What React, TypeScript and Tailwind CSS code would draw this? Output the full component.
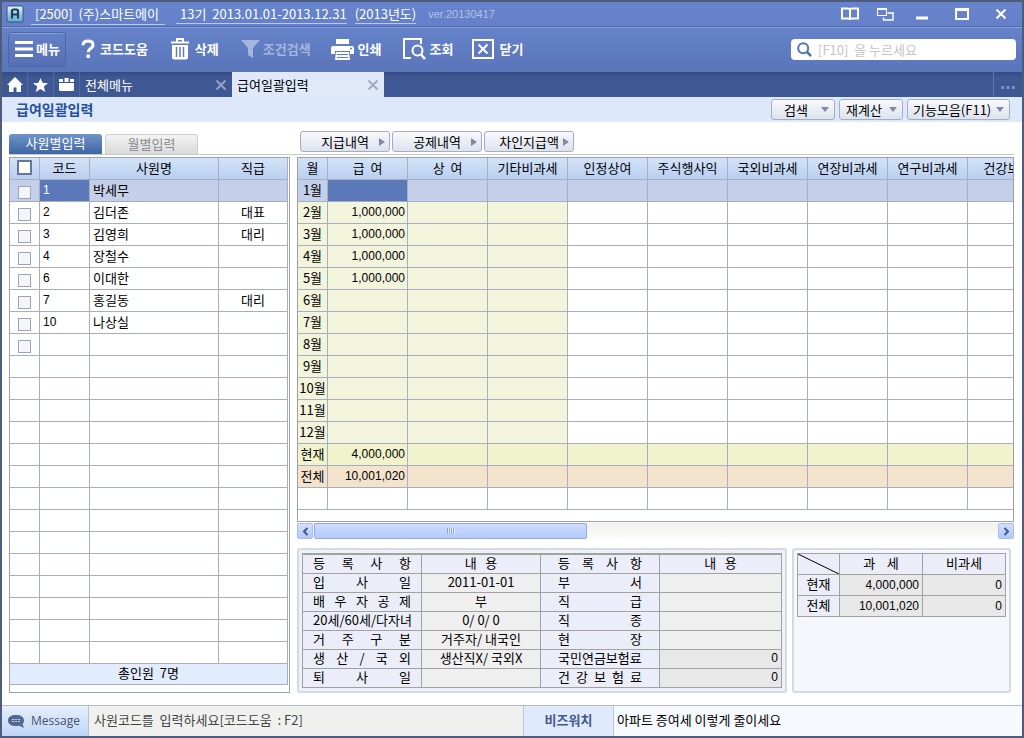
import React from "react";

type Employee = { code: string; name: string; rank: string };

const EMPLOYEES: Employee[] = [
  { code: "1", name: "박세무", rank: "" },
  { code: "2", name: "김더존", rank: "대표" },
  { code: "3", name: "김영희", rank: "대리" },
  { code: "4", name: "장철수", rank: "" },
  { code: "6", name: "이대한", rank: "" },
  { code: "7", name: "홍길동", rank: "대리" },
  { code: "10", name: "나상실", rank: "" },
];

const EMPLOYEE_ROWS = 22;

const PAY_COLUMNS = [
  "급 여",
  "상 여",
  "기타비과세",
  "인정상여",
  "주식행사익",
  "국외비과세",
  "연장비과세",
  "연구비과세",
  "건강보험",
];

type PayRow = { label: string; pay: string; kind: "selected" | "month" | "current" | "total" | "blank" };

const PAY_ROWS: PayRow[] = [
  { label: "1월", pay: "", kind: "selected" },
  ...["2월", "3월", "4월", "5월"].map((label): PayRow => ({ label, pay: "1,000,000", kind: "month" })),
  ...["6월", "7월", "8월", "9월", "10월", "11월", "12월"].map((label): PayRow => ({ label, pay: "", kind: "month" })),
  { label: "현재", pay: "4,000,000", kind: "current" },
  { label: "전체", pay: "10,001,020", kind: "total" },
  { label: "", pay: "", kind: "blank" },
];

const DETAILS = [
  ["입 사 일", "2011-01-01", "부 서", ""],
  ["배 우 자 공 제", "부", "직 급", ""],
  ["20세/60세/다자녀", "0/ 0/ 0", "직 종", ""],
  ["거 주 구 분", "거주자/ 내국인", "현 장", ""],
  ["생 산 / 국 외", "생산직X/ 국외X", "국민연금보험료", "0"],
  ["퇴 사 일", "", "건 강 보 험 료", "0"],
];

function payCellColor(kind: PayRow["kind"], column: number) {
  if (kind === "selected") return column === 0 ? "bg-[#5b78b8]" : "bg-[#c4cfe9]";
  if (kind === "current") return "bg-[#f1f3cc]";
  if (kind === "total") return "bg-[#f3e3cc]";
  if (kind === "month" && column < 3) return "bg-[#f3f4dc]";
  return "bg-white";
}

const CELL = "h-[22px] border-r border-b border-[#a9adc0] p-0 pb-0.5 leading-[18px] font-normal whitespace-nowrap";
const HEAD = "bg-linear-to-b from-[#d3e3f8] to-[#b9cff0]";

function Logo() {
  return (
    <svg width="18" height="18" viewBox="0 0 18 18" className="shrink-0" aria-hidden="true">
      <defs>
        <linearGradient id="logo" x1="0" y1="0" x2="0" y2="1">
          <stop offset="0" stopColor="#e4f6fa" />
          <stop offset="1" stopColor="#5aa9cf" />
        </linearGradient>
      </defs>
      <rect x="1" y="1" width="16" height="16" rx="1" fill="url(#logo)" stroke="#3c5080" />
      <path d="M6 13.500V6Q6 4.500 7.500 4.500h3Q12 4.500 12 6V13.500M6 9.500h6" fill="none" stroke="#1f3f5c" strokeWidth="2.200" />
    </svg>
  );
}

const HelpIcon = () => (
  <svg width="14" height="20" viewBox="0 0 14 20" aria-hidden="true">
    <path d="M2 6.200Q2 2 7 2t5 3.800q0 2.400-2.500 3.800Q7.200 11 7.200 13.300" fill="none" stroke="#fff" strokeWidth="3" />
    <rect x="5.500" y="15.500" width="3.400" height="3.500" fill="#fff" />
  </svg>
);

const TrashIcon = () => (
  <svg width="18" height="22" viewBox="0 0 18 22" aria-hidden="true">
    <path d="M6 3.500V1h6v2.500M0 4.500h18" fill="none" stroke="#fff" strokeWidth="2" />
    <path d="M1 7h16v12.500q0 2-2 2H3q-2 0-2-2z" fill="#fff" />
    <path d="M5.500 9v10M9 9v10M12.500 9v10" stroke="#5f7bc1" strokeWidth="1.500" />
  </svg>
);

const FunnelIcon = () => (
  <svg width="19" height="18" viewBox="0 0 19 18" aria-hidden="true">
    <path d="M0 0h19l-7 8v10l-5-3V8z" fill="#a5b6de" />
  </svg>
);

const PrinterIcon = () => (
  <svg width="23" height="23" viewBox="0 0 23 23" aria-hidden="true">
    <path d="M5 1h13v5H5z" fill="#fff" />
    <path d="M2 8h19q2 0 2 2v6h-4v-3H4v3H0v-6q0-2 2-2z" fill="#fff" />
    <path d="M5 14h13l1 8H4z" fill="#fff" />
    <path d="M6 16.500h11M6 19.500h11" stroke="#5f7bc1" />
    <circle cx="20" cy="10.500" r="1" fill="#5f7bc1" />
  </svg>
);

const LookupIcon = () => (
  <svg width="23" height="22" viewBox="0 0 23 22" aria-hidden="true">
    <path d="M8 20H1V1h17v5" fill="none" stroke="#fff" strokeWidth="2" />
    <circle cx="14.500" cy="12.500" r="5" fill="none" stroke="#fff" strokeWidth="2" />
    <path d="M18 16.500l4 4.500" stroke="#fff" strokeWidth="2.400" />
  </svg>
);

const CloseBoxIcon = () => (
  <svg width="22" height="20" viewBox="0 0 22 20" aria-hidden="true">
    <rect x="1" y="1" width="20" height="18" fill="none" stroke="#fff" strokeWidth="2" />
    <path d="M6.500 5.500l9 9M15.500 5.500l-9 9" stroke="#fff" strokeWidth="2" />
  </svg>
);

const CrossIcon = ({ className }: { className: string }) => (
  <svg width="10" height="10" viewBox="0 0 10 10" className={className} aria-hidden="true">
    <path d="M0.500 0.500l9 9M9.500 0.500l-9 9" fill="none" stroke="currentColor" strokeWidth="2" />
  </svg>
);

function TitleBar() {
  return (
    <header className="flex h-[25px] items-center justify-between border-b border-[#4f6bb0] bg-linear-to-b from-[#6684cd] to-[#6580c8] pr-4 pl-1 text-white">
      <div className="flex items-center">
        <Logo />
        <span className="ml-[7px] border-b border-[#b9c8ea] pr-1.5 pl-1 leading-5">[2500]&nbsp; (주)스마트에이</span>
        <span className="ml-[11px] border-b border-[#b9c8ea] pl-1 leading-[19px]">13기&nbsp; 2013.01.01-2013.12.31</span>
        <span className="ml-2 border-b border-[#b9c8ea] leading-[19px]">(2013년도)</span>
        <span className="ml-3 font-['Liberation_Sans',sans-serif] text-[11px] text-[#b3c2e8]">ver.20130417</span>
      </div>
      <div className="flex items-center">
        <button type="button" aria-label="도움말" className="mr-[18px]">
          <svg width="18" height="14" viewBox="0 0 18 14">
            <path d="M1 1.500h6q2 0 2 1.500 0-1.500 2-1.500h6v10h-6q-2 0-2 1.500 0-1.500-2-1.500H1zM9 3v10" fill="none" stroke="#fff" strokeWidth="2" />
          </svg>
        </button>
        <button type="button" aria-label="창 전환" className="mr-[22px]">
          <svg width="17" height="13" viewBox="0 0 17 13">
            <rect x="0.500" y="1" width="9" height="6.500" fill="none" stroke="#fff" />
            <path d="M0 1h10" stroke="#fff" strokeWidth="2" />
            <path d="M10.500 5h6M16 4v8.500M16.500 12H6.500V9.500" fill="none" stroke="#fff" strokeWidth="1.400" />
          </svg>
        </button>
        <button type="button" aria-label="최소화" className="mr-[27px]">
          <svg width="12" height="12" viewBox="0 0 12 12">
            <path d="M0 10h12" stroke="#fff" strokeWidth="3" />
          </svg>
        </button>
        <button type="button" aria-label="최대화" className="mr-[27px]">
          <svg width="14" height="12" viewBox="0 0 14 12">
            <path d="M1 1h12v10H1z" fill="none" stroke="#fff" strokeWidth="2" />
            <path d="M0 1.500h14" stroke="#fff" strokeWidth="3" />
          </svg>
        </button>
        <button type="button" aria-label="창 닫기">
          <CrossIcon className="text-white" />
        </button>
      </div>
    </header>
  );
}

function ToolButton({ icon, label, muted, className }: { icon: React.ReactNode; label: string; muted?: boolean; className: string }) {
  return (
    <button type="button" className={`flex items-center font-bold ${muted ? "text-[#a5b6de]" : "text-white"} ${className}`}>
      {icon}
      {label}
    </button>
  );
}

function Toolbar() {
  return (
    <div className="flex h-[45px] items-center justify-between border-t border-[#8aa2dc] bg-linear-to-b from-[#6682ca] to-[#5a75b8] pr-1.5 pb-0.5 pl-1.5">
      <div className="flex items-center">
        <button
          type="button"
          className="flex h-[35px] w-[58px] items-center gap-[3px] rounded border border-[#4a65a8] bg-linear-to-b from-[#6581c6] to-[#5570b2] pl-1.5 font-bold text-white shadow-[inset_0_1px_0_#86a0dc]"
        >
          <svg width="18" height="16" viewBox="0 0 18 16" className="shrink-0" aria-hidden="true">
            <path d="M0 1.500h18M0 8h18M0 14.500h18" stroke="#fff" strokeWidth="3" />
          </svg>
          메뉴
        </button>
        <ToolButton icon={<HelpIcon />} label="코드도움" className="ml-[15px] gap-[5px]" />
        <ToolButton icon={<TrashIcon />} label="삭제" className="ml-[23px] gap-1.5" />
        <ToolButton icon={<FunnelIcon />} label="조건검색" muted className="ml-[22px] gap-[3px]" />
        <ToolButton icon={<PrinterIcon />} label="인쇄" className="ml-5 gap-1" />
        <ToolButton icon={<LookupIcon />} label="조회" className="ml-[21px] gap-1" />
        <ToolButton icon={<CloseBoxIcon />} label="닫기" className="ml-[19px] gap-[5px]" />
      </div>
      <label className="flex h-[21px] w-[225px] items-center gap-1.5 rounded-[4px] bg-white pl-1.5">
        <svg width="15" height="15" viewBox="0 0 15 15" className="shrink-0" aria-hidden="true">
          <circle cx="6.200" cy="6.200" r="5" fill="none" stroke="#5573ae" strokeWidth="2" />
          <path d="M10 10l4 4" stroke="#5573ae" strokeWidth="2.500" />
        </svg>
        <input
          type="text"
          aria-label="검색어"
          placeholder="[F10]  을 누르세요"
          className="h-full min-w-0 flex-1 bg-transparent outline-none placeholder:text-[#c4c4c8]"
        />
      </label>
    </div>
  );
}

function TabBar() {
  const iconCell = "flex w-[26px] items-center justify-center border-r border-[#5069a3]";
  return (
    <nav className="flex h-[25px] bg-linear-to-b from-[#344b80] via-[#3f5893] via-20% to-[#3f5893] text-white">
      <button type="button" aria-label="홈" className={iconCell}>
        <svg width="16" height="15" viewBox="0 0 16 15">
          <path d="M8 0l8 8h-2v7H9.500v-4.500h-3V15H2V8H0z" fill="#fff" />
        </svg>
      </button>
      <button type="button" aria-label="즐겨찾기" className={iconCell}>
        <svg width="15" height="14" viewBox="0 0 15 14">
          <path d="M7.500 0l2.100 4.800 5.400.4-4.200 3.400L12.200 14 7.500 11 2.800 14l1.400-5.400L0 5.200l5.400-.4z" fill="#fff" />
        </svg>
      </button>
      <button type="button" aria-label="화면목록" className={iconCell}>
        <svg width="15" height="13" viewBox="0 0 15 13">
          <path d="M0 5h15v6.500q0 1.500-1.500 1.500h-12Q0 13 0 11.500zM0 1h4v3H0zM5.500 0h4v4h-4zM11 1h4v3h-4z" fill="#fff" />
        </svg>
      </button>
      <a href="#menu" className="flex w-[152px] items-center justify-between pr-1.5 pl-[5px]">
        전체메뉴
        <CrossIcon className="text-[#93a3c8]" />
      </a>
      <a href="#payroll" className="flex w-[152px] items-center justify-between bg-[#dfe9fa] pr-1.5 pl-[5px] text-black">
        급여일괄입력
        <CrossIcon className="text-[#a3abba]" />
      </a>
      <button type="button" aria-label="더보기" className="ml-auto w-[29px] border-l border-[#5f77ae] pt-1.5">
        <svg width="14" height="3" viewBox="0 0 14 3" className="mx-auto">
          <path d="M0 0h3v3H0zM5.500 0h3v3h-3zM11 0h3v3h-3z" fill="#7d90bf" />
        </svg>
      </button>
    </nav>
  );
}

const BUTTON = "flex h-[21px] items-center justify-between rounded-[3px] border border-[#a3adc6] bg-linear-to-b from-[#f8f9fc] to-[#dde2ec] whitespace-nowrap text-black";

function MenuButton({ label, className }: { label: string; className: string }) {
  return (
    <button type="button" className={`${BUTTON} ${className}`}>
      {label}
      <svg width="8" height="5" viewBox="0 0 8 5" className="shrink-0" aria-hidden="true">
        <path d="M0 0h8L4 5z" fill="#8289a3" />
      </svg>
    </button>
  );
}

function JumpButton({ label }: { label: string }) {
  return (
    <button type="button" className={`${BUTTON} w-[90px] pr-1`}>
      <span className="flex-1 text-right">{label}</span>
      <svg width="6" height="8" viewBox="0 0 6 8" className={label.length > 4 ? "ml-1" : "ml-2.5"} aria-hidden="true">
        <path d="M0 0l6 4-6 4z" fill="#8289a3" />
      </svg>
    </button>
  );
}

function EmployeeGrid() {
  const rows: (Employee | null)[] = Array.from({ length: EMPLOYEE_ROWS }, (_, i) => EMPLOYEES[i] ?? null);
  return (
    <section className="w-[281px] shrink-0 border border-[#9aa3bb] bg-white">
      <table className="w-[278px] table-fixed border-separate border-spacing-0">
        <colgroup>
          <col className="w-[30px]" />
          <col className="w-[50px]" />
          <col className="w-[129px]" />
          <col className="w-[69px]" />
        </colgroup>
        <thead>
          <tr>
            <th className={`${CELL} ${HEAD}`}>
              <input type="checkbox" aria-label="전체 선택" className="mx-auto block size-[15px] appearance-none border-2 border-[#64779f] bg-white" />
            </th>
            <th className={`${CELL} ${HEAD}`}>코드</th>
            <th className={`${CELL} ${HEAD}`}>사원명</th>
            <th className={`${CELL} ${HEAD}`}>직급</th>
          </tr>
        </thead>
        <tbody>
          {rows.map((row, i) => {
            const tone = i === 0 ? "bg-[#c4cfe9]" : "bg-white";
            return (
              <tr key={i}>
                <td className={`${CELL} ${tone} align-bottom`}>
                  {i <= EMPLOYEES.length && (
                    <input
                      type="checkbox"
                      aria-label={row ? `${row.name} 선택` : "새 사원 선택"}
                      className="mx-auto block size-[13px] appearance-none border border-[#9da3b8] bg-[#f4f5f8]"
                    />
                  )}
                </td>
                <td className={`${CELL} ${i === 0 ? "bg-[#5b78b8] text-white" : tone} pl-[3px] font-['Liberation_Sans',sans-serif] text-xs`}>
                  {row?.code}
                </td>
                <td className={`${CELL} ${tone} pl-[3px]`}>{row?.name}</td>
                <td className={`${CELL} ${tone} text-center`}>{row?.rank}</td>
              </tr>
            );
          })}
        </tbody>
        <tfoot>
          <tr>
            <td colSpan={4} className="h-[21px] border-r border-b border-[#a9adc0] bg-[#e1ecfc] p-0 pb-0.5 text-center leading-[18px]">
              총인원&nbsp; 7명
            </td>
          </tr>
        </tfoot>
      </table>
    </section>
  );
}

function PayGrid() {
  return (
    <div className="overflow-hidden border border-[#9aa0b0] bg-white pb-[11px]">
      <table className="w-[750px] table-fixed border-separate border-spacing-0">
        <colgroup>
          <col className="w-[30px]" />
          {PAY_COLUMNS.map((c) => (
            <col key={c} className="w-20" />
          ))}
        </colgroup>
        <thead>
          <tr>
            <th className={`${CELL} ${HEAD}`}>월</th>
            {PAY_COLUMNS.map((c) => (
              <th key={c} className={`${CELL} ${HEAD}`}>
                {c.replace(" ", "\u00a0\u00a0")}
              </th>
            ))}
          </tr>
        </thead>
        <tbody>
          {PAY_ROWS.map((row, r) => (
            <tr key={r}>
              <th className={`${CELL} ${row.kind === "selected" ? "bg-[#c4cfe9]" : payCellColor(row.kind, 1)}`}>{row.label}</th>
              {PAY_COLUMNS.map((c, i) => (
                <td
                  key={c}
                  className={`${CELL} ${payCellColor(row.kind, i)} pr-0.5 text-right font-['Liberation_Sans',sans-serif] text-xs`}
                >
                  {i === 0 ? row.pay : ""}
                </td>
              ))}
            </tr>
          ))}
        </tbody>
      </table>
    </div>
  );
}

function ScrollBar() {
  const arrow = "flex w-4 shrink-0 items-center justify-center rounded-[2px] border border-[#a9bdee] bg-linear-to-b from-[#d3defb] to-[#b4c8f8]";
  return (
    <div className="mt-px flex h-4 bg-linear-to-b from-[#f0f0ec] to-[#fdfdfb]">
      <button type="button" aria-label="왼쪽으로" className={arrow}>
        <svg width="7" height="9" viewBox="0 0 7 9">
          <path d="M5.500 1L2 4.500 5.500 8" fill="none" stroke="#405a94" strokeWidth="2" />
        </svg>
      </button>
      <div className="min-w-0 flex-1 px-px">
        <div className="flex h-4 w-2/5 items-center justify-center gap-px rounded-[2px] border border-[#8eabe6] bg-linear-to-b from-[#cddcff] to-[#b6c9fa]">
          {[0, 1, 2, 3].map((n) => (
            <span key={n} className="h-1.5 w-px bg-[#8aa5e6] shadow-[1px_0_0_#e6eeff]" />
          ))}
        </div>
      </div>
      <button type="button" aria-label="오른쪽으로" className={arrow}>
        <svg width="7" height="9" viewBox="0 0 7 9">
          <path d="M1.500 1L5 4.500 1.500 8" fill="none" stroke="#405a94" strokeWidth="2" />
        </svg>
      </button>
    </div>
  );
}

const PANEL = "rounded-[3px] border-2 border-[#d3dae6] p-[3px]";
const DETAIL = "h-[19px] border-r border-b border-[#a3a29e] p-0 pb-0.5 leading-4 font-normal whitespace-nowrap";

function DetailPanel() {
  return (
    <div className={`${PANEL} min-w-0 flex-1 bg-[#edf1f8]`}>
      <table className="w-full table-fixed border-separate border-spacing-0 border-t-2 border-l border-[#a3a29e]">
        <colgroup>
          <col className="w-[119px]" />
          <col className="w-[119px]" />
          <col className="w-[119px]" />
          <col />
        </colgroup>
        <thead>
          <tr>
            <th className={`${DETAIL} bg-[#ebeef8] px-2.5 [text-align-last:justify]`}>등 록 사 항</th>
            <th className={`${DETAIL} bg-[#ebeef8]`}>내&nbsp;&nbsp; 용</th>
            <th className={`${DETAIL} bg-[#ebeef8] px-[17px] [text-align-last:justify]`}>등 록 사 항</th>
            <th className={`${DETAIL} bg-[#ebeef8]`}>내&nbsp;&nbsp; 용</th>
          </tr>
        </thead>
        <tbody>
          {DETAILS.map(([a, av, b, bv]) => (
            <tr key={a}>
              <th className={`${DETAIL} bg-[#ebeef8] px-2.5 [text-align-last:justify]`}>{a}</th>
              <td className={`${DETAIL} bg-[#efefef] text-center`}>{av}</td>
              <th className={`${DETAIL} bg-[#ebeef8] px-[17px] [text-align-last:justify]`}>{b}</th>
              <td className={`${DETAIL} ${bv ? "bg-[#e8e8e8]" : "bg-[#efefef]"} pr-[3px] text-right font-['Liberation_Sans',sans-serif] text-xs`}>
                {bv}
              </td>
            </tr>
          ))}
        </tbody>
      </table>
    </div>
  );
}

function TaxPanel() {
  const rows = [
    ["현재", "4,000,000", "0"],
    ["전체", "10,001,020", "0"],
  ];
  const cell = "h-[21px] border-r border-b border-[#a3a29e] leading-[18px] font-normal whitespace-nowrap";
  return (
    <div className={`${PANEL} w-[219px] shrink-0 bg-[#f4f7fc]`}>
      <table className="w-full table-fixed border-separate border-spacing-0 border-t border-l border-[#a3a29e]">
        <colgroup>
          <col className="w-[42px]" />
          <col />
          <col />
        </colgroup>
        <thead>
          <tr>
            <th className={`${cell} bg-[#ebeef8] p-0`}>
              <svg width="41" height="20" viewBox="0 0 41 20" className="block" aria-hidden="true">
                <path d="M0 0l41 20" stroke="#000" />
              </svg>
            </th>
            <th className={`${cell} bg-[#ebeef8] p-0 pb-0.5`}>과&nbsp;&nbsp;&nbsp; 세</th>
            <th className={`${cell} bg-[#ebeef8] p-0 pb-0.5`}>비과세</th>
          </tr>
        </thead>
        <tbody>
          {rows.map(([label, taxed, free]) => (
            <tr key={label}>
              <th className={`${cell} bg-[#ebeef8] p-0 pb-0.5`}>{label}</th>
              <td className={`${cell} bg-[#e8e8e8] p-0 pr-[3px] text-right font-['Liberation_Sans',sans-serif] text-xs`}>{taxed}</td>
              <td className={`${cell} bg-[#e8e8e8] p-0 pr-[3px] text-right font-['Liberation_Sans',sans-serif] text-xs`}>{free}</td>
            </tr>
          ))}
        </tbody>
      </table>
    </div>
  );
}

function StatusBar() {
  return (
    <footer className="flex h-[31px] border-t border-[#b4bcc8] bg-[#f6f9fe]">
      <div className="flex w-[87px] shrink-0 items-center gap-1.5 border-r border-[#b4c2d8] bg-linear-to-b from-[#e6effc] to-[#bfd5f6] pl-1.5 font-['Open_Sans',sans-serif] text-xs text-[#46536f]">
        <svg width="17" height="13" viewBox="0 0 17 13" className="shrink-0" aria-hidden="true">
          <path d="M8 0c5 0 8 2 8 5.500 0 1.500-.5 2.500-1.500 3.500l1.500 4-4.500-2.300c-1 .3-2.200.4-3.500.4C3 11 0 9 0 5.500S3 0 8 0z" fill="#54678f" />
          <path d="M4 4.500h8M4 6.500h8" stroke="#c9d6ee" strokeDasharray="2 1" />
        </svg>
        Message
      </div>
      <div className="flex flex-1 items-center bg-[#f0f0ee] pb-0.5 pl-[5px] text-[#444]">사원코드를&nbsp; 입력하세요[코드도움&nbsp; : F2]</div>
      <div className="flex w-[91px] shrink-0 items-center justify-center border-r border-l border-[#b9c8de] bg-[#dfebfc] pb-0.5 font-bold text-[#43598c]">
        비즈워치
      </div>
      <div className="flex w-[408px] shrink-0 items-center pb-0.5 pl-[3px] text-black">아파트 증여세 이렇게 줄이세요</div>
    </footer>
  );
}

export default function App() {
  return (
    <div className="flex min-h-screen flex-col border-2 border-[#4d5b7c] bg-white font-['Noto_Sans_CJK_KR',sans-serif] text-[13px] text-black">
      <TitleBar />
      <Toolbar />
      <TabBar />
      <div className="flex h-[25px] items-center justify-between bg-[#dde9fa] pr-3 pl-[14px]">
        <h1 className="text-[14px] font-bold text-[#27509c]">급여일괄입력</h1>
        <div className="flex gap-1">
          <MenuButton label="검색" className="w-16 pr-[5px] pl-3" />
          <MenuButton label="재계산" className="w-16 pr-[5px] pl-1.5" />
          <MenuButton label="기능모음(F11)" className="w-[103px] pr-[5px] pl-[5px]" />
        </div>
      </div>
      <main className="flex flex-1 flex-col pr-2 pb-3 pl-[7px]">
        <div className="flex h-[33px] border-b border-[#c6cdc4]">
          <div className="flex w-[291px] shrink-0 items-end gap-[3px]">
            <button type="button" className="h-5 w-[93px] rounded-t-[3px] bg-linear-to-b from-[#6f94c8] to-[#3f66a6] pb-0.5 leading-[18px] text-white">
              사원별입력
            </button>
            <button type="button" className="h-5 w-[93px] rounded-t-[3px] border border-b-0 border-[#cfcfcf] bg-linear-to-b from-[#f4f4f4] to-[#d9d9d9] pb-0.5 leading-[17px] text-[#8a8a8a]">
              월별입력
            </button>
          </div>
          <div className="flex items-end gap-0.5 pb-0.5">
            <JumpButton label="지급내역" />
            <JumpButton label="공제내역" />
            <JumpButton label="차인지급액" />
          </div>
        </div>
        <div className="mt-0.5 flex flex-1 gap-[7px]">
          <EmployeeGrid />
          <section className="flex min-w-0 flex-1 flex-col">
            <PayGrid />
            <ScrollBar />
            <div className="mt-[9px] flex flex-1 gap-[5px] pr-[3px]">
              <DetailPanel />
              <TaxPanel />
            </div>
          </section>
        </div>
      </main>
      <StatusBar />
    </div>
  );
}
